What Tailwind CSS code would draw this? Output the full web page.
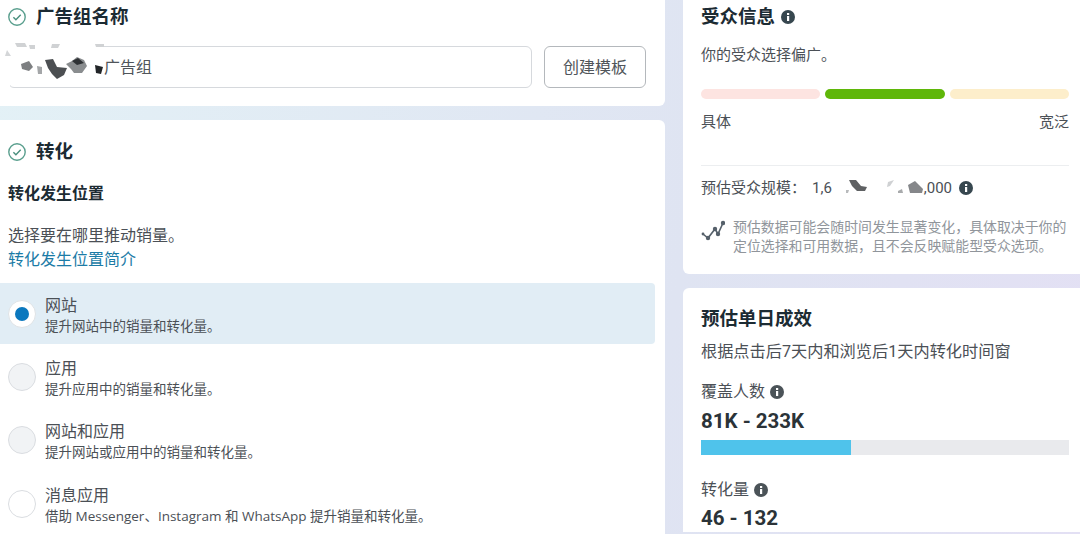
<!DOCTYPE html>
<html lang="zh-CN">
  <head>
    <meta charset="UTF-8" />
    <title>广告组</title>
    <script src="https://cdn.jsdelivr.net/npm/@tailwindcss/browser@4"></script>
  </head>
  <body class="h-[534px] overflow-hidden bg-[linear-gradient(100deg,#e3f1f6_0%,#dfe4f2_62%,#e3e0f4_100%)] font-['Roboto','Noto_Sans_CJK_SC',sans-serif] text-[#4b5056]">
    <div class="flex items-start">
      <!-- left column -->
      <div class="flex w-[665px] flex-col gap-[14px]">
        <section class="rounded-br-md bg-white pb-[18px] pt-[5px]">
          <div class="flex items-center pl-2">
            <svg class="mr-[10px] h-[18px] w-[18px]" viewBox="0 0 18 18" fill="none" stroke="#5a9f8e" stroke-width="1.4"><circle cx="9" cy="9" r="8.2" /><path d="M5.4 9.2l2.5 2.5 4.8-5" stroke="#4a8f7e" /></svg>
            <h2 class="text-[18.5px] font-bold leading-6 text-[#1c2b33]">广告组名称</h2>
          </div>
          <div class="mt-[17px] flex pl-2">
            <div class="relative flex h-[42px] w-[524px] items-center rounded-md border border-[#d6d9dd] pl-[95px] pt-[2px] text-[16px] text-[#50555a]">
              广告组
              <svg class="absolute left-[-9px] top-[-7px] blur-[0.6px]" width="110" height="50" viewBox="0 40 110 50">
                <rect x="0" y="44" width="100" height="5" fill="#fff" />
                <rect x="0" y="44" width="10" height="44" fill="#fff" />
                <path d="M15 43h10l2 4h-10zM29 45h6v4h-5zM52 44h8l-2 4h-7zM95 44h9v3h-8z" fill="#d0d2d4" />
                <path d="M7 50l4 6H5z" fill="#d4d6d8" />
                <path d="M21 64l8-3 4 6-4 4-7-2z" fill="#7d7f81" />
                <path d="M37 66l5 1v7h-4z" fill="#a4a6a8" />
                <path d="M45 60l8-1 4 8 10 1-3 7-7 4-5-5-4-6z" fill="#4c4f52" />
                <path d="M66 64l6-3 5-4 7 3 3 6-5 7-8 0-3-4z" fill="#8a8d8f" />
                <path d="M72 61l6-3 6 5-7 2z" fill="#2f3235" />
                <path d="M95 65l8 2-2 7-5-1z" fill="#222528" />
              </svg>
            </div>
            <button class="ml-3 h-[42px] w-[102px] rounded-md border border-[#b4b8bc] pt-[2px] text-[16px] text-[#50555a]">创建模板</button>
          </div>
        </section>

        <section class="rounded-tr-md bg-white pt-5">
          <div class="flex items-center pl-2">
            <svg class="mr-[10px] h-[18px] w-[18px]" viewBox="0 0 18 18" fill="none" stroke="#5a9f8e" stroke-width="1.4"><circle cx="9" cy="9" r="8.2" /><path d="M5.4 9.2l2.5 2.5 4.8-5" stroke="#4a8f7e" /></svg>
            <h2 class="text-[18.5px] font-bold leading-6 text-[#1c2b33]">转化</h2>
          </div>
          <h3 class="mt-[18px] pl-2 text-[16px] font-bold leading-6 text-[#1c2b33]">转化发生位置</h3>
          <p class="mt-[18px] pl-2 text-[16px] leading-6">选择要在哪里推动销量。</p>
          <a class="block pl-2 text-[16px] leading-6 text-[#1b7ba6]" href="#">转化发生位置简介</a>

          <div class="mt-[11px] flex h-[61px] w-[655px] items-center rounded-r bg-[#e1edf5] pl-2">
            <span class="flex h-7 w-7 items-center justify-center rounded-full border border-[#dfe3e6] bg-white"><span class="h-[14px] w-[14px] rounded-full bg-[#0b78be]"></span></span>
            <div class="ml-[9px] mt-[3px]">
              <div class="text-[16px] leading-[21px]">网站</div>
              <div class="font-['Open_Sans','Noto_Sans_CJK_SC',sans-serif] text-[13.5px] leading-5">提升网站中的销量和转化量。</div>
            </div>
          </div>
          <div class="mt-[2px] flex h-[61px] items-center pl-2">
            <span class="h-7 w-7 rounded-full border border-[#dadde1] bg-[#f1f3f5]"></span>
            <div class="ml-[9px] mt-[3px]">
              <div class="text-[16px] leading-[21px]">应用</div>
              <div class="font-['Open_Sans','Noto_Sans_CJK_SC',sans-serif] text-[13.5px] leading-5">提升应用中的销量和转化量。</div>
            </div>
          </div>
          <div class="mt-[2px] flex h-[61px] items-center pl-2">
            <span class="h-7 w-7 rounded-full border border-[#dadde1] bg-[#f1f3f5]"></span>
            <div class="ml-[9px] mt-[3px]">
              <div class="text-[16px] leading-[21px]">网站和应用</div>
              <div class="font-['Open_Sans','Noto_Sans_CJK_SC',sans-serif] text-[13.5px] leading-5">提升网站或应用中的销量和转化量。</div>
            </div>
          </div>
          <div class="mt-[3px] flex h-[61px] items-center pl-2">
            <span class="h-7 w-7 rounded-full border border-[#dadde1] bg-white"></span>
            <div class="ml-[9px] mt-[3px]">
              <div class="text-[16px] leading-[21px]">消息应用</div>
              <div class="font-['Open_Sans','Noto_Sans_CJK_SC',sans-serif] text-[13.5px] leading-5">借助 Messenger、Instagram 和 WhatsApp 提升销量和转化量。</div>
            </div>
          </div>
        </section>
      </div>

      <!-- right column -->
      <div class="ml-[18px] flex flex-1 flex-col gap-[14px]">
        <section class="rounded-bl-md bg-white pb-[18px] pl-[18px] pr-[11px] pt-[5px]">
          <div class="flex items-center">
            <h2 class="text-[18.5px] font-bold leading-6 text-[#1c2b33]">受众信息</h2>
            <svg class="ml-[6px] h-[14px] w-[14px]" viewBox="0 0 14 14"><circle cx="7" cy="7" r="7" fill="#37474f" /><rect x="6" y="6" width="2.2" height="5" fill="#fff" /><rect x="6" y="3" width="2.2" height="2" fill="#fff" /></svg>
          </div>
          <p class="mt-[15px] text-[15px] leading-[22px]">你的受众选择偏广。</p>
          <div class="mt-[23px] flex gap-[5px]">
            <span class="h-[10px] flex-1 rounded-full bg-[#fde4e1]"></span>
            <span class="h-[10px] flex-1 rounded-full bg-[#5fb709]"></span>
            <span class="h-[10px] flex-1 rounded-full bg-[#fdeecb]"></span>
          </div>
          <div class="mt-3 flex justify-between text-[15px] leading-[22px]">
            <span>具体</span><span>宽泛</span>
          </div>
          <div class="mt-8 border-t border-[#eceef0]"></div>
          <div class="mt-[11px] flex items-center text-[15px] leading-[22px]">
            <span class="w-[111px]">预估受众规模：</span>
            <span>1,6</span>
            <svg class="blur-[0.6px]" width="92" height="22" viewBox="0 0 92 22">
              <path d="M14 13l3 0-1 3h-2z" fill="#b8babc" />
              <path d="M17 3l7 0 5 6 6 1-2 4-8 0-5-5z" fill="#5f6163" />
              <path d="M56 5l6-2-4 6-3 1z" fill="#cfd1d3" />
              <path d="M66 14l4-2 1 4-5 0z" fill="#a8aaac" />
              <path d="M76 8l7-4 8 8-1 4H78z" fill="#85878a" />
            </svg>
            <span>,000</span>
            <svg class="ml-[7px] h-[14px] w-[14px]" viewBox="0 0 14 14"><circle cx="7" cy="7" r="7" fill="#37474f" /><rect x="6" y="6" width="2.2" height="5" fill="#fff" /><rect x="6" y="3" width="2.2" height="2" fill="#fff" /></svg>
          </div>
          <div class="mt-[19px] flex">
            <svg class="mt-[2px] h-[21px] w-[24px] shrink-0" viewBox="0 0 24 21" fill="none" stroke="#55606a" stroke-width="1.6"><path d="M2 14l5 4 7-9 3 5 5-11" /><g fill="#55606a" stroke="none"><circle cx="2" cy="14" r="1.4" /><circle cx="7" cy="18" r="2.2" /><circle cx="14" cy="9" r="2.2" /><circle cx="17" cy="14" r="2.2" /><circle cx="22" cy="3" r="2.2" /></g></svg>
            <p class="ml-[8px] text-[13.9px] leading-[19px] text-[#90959b]">预估数据可能会随时间发生显著变化，具体取决于你的定位选择和可用数据，且不会反映赋能型受众选项。</p>
          </div>
        </section>

        <section class="rounded-tl-md bg-white pl-[18px] pr-[11px] pt-[19px]">
          <h2 class="text-[18.5px] font-bold leading-6 text-[#1c2b33]">预估单日成效</h2>
          <p class="mt-[9px] text-[16.2px] leading-6">根据点击后7天内和浏览后1天内转化时间窗</p>
          <div class="mt-4 flex items-center">
            <span class="text-[16px] leading-6">覆盖人数</span>
            <svg class="ml-[5px] h-[14px] w-[14px]" viewBox="0 0 14 14"><circle cx="7" cy="7" r="7" fill="#4b5358" /><rect x="6" y="6" width="2.2" height="5" fill="#fff" /><rect x="6" y="3" width="2.2" height="2" fill="#fff" /></svg>
          </div>
          <div class="mt-[3px] text-[20.5px] font-bold leading-7 text-[#2b3338]">81K - 233K</div>
          <div class="mt-[5px] h-[15px] bg-[#e9eaed]"><div class="h-full w-[150px] bg-[#4fc3eb]"></div></div>
          <div class="mt-[23px] flex items-center">
            <span class="text-[16px] leading-6">转化量</span>
            <svg class="ml-[5px] h-[14px] w-[14px]" viewBox="0 0 14 14"><circle cx="7" cy="7" r="7" fill="#4b5358" /><rect x="6" y="6" width="2.2" height="5" fill="#fff" /><rect x="6" y="3" width="2.2" height="2" fill="#fff" /></svg>
          </div>
          <div class="mt-[2px] text-[20.5px] font-bold leading-7 text-[#2b3338]">46 - 132</div>
        </section>
      </div>
    </div>
  </body>
</html>
